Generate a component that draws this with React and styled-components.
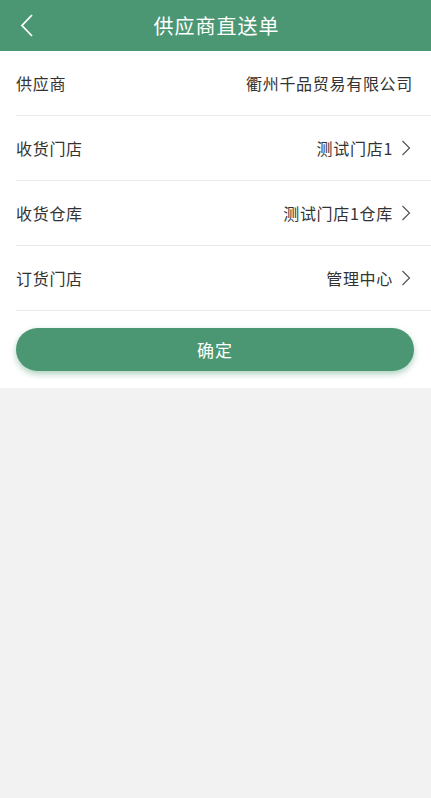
import React from "react";
import styled, { createGlobalStyle } from "styled-components";

const GlobalStyle = createGlobalStyle`
  html, body {
    margin: 0;
    padding: 0;
    background: #f2f2f2;
    font-family: "Noto Sans CJK SC", "Noto Sans", sans-serif;
  }
`;

const Page = styled.div`
  min-height: 798px;
  background: #f2f2f2;
`;

const Header = styled.div`
  height: 51px;
  background: #4b9773;
  display: flex;
  align-items: center;
  justify-content: center;
  position: relative;
  color: #fff;
  font-size: 20px;
  letter-spacing: 1px;
  padding-left: 2px;
`;

const BackButton = styled.div`
  position: absolute;
  left: 18px;
  top: 13px;
  width: 18px;
  height: 26px;
  display: flex;
`;

const Panel = styled.div`
  background: #fff;
  padding-bottom: 17px;
`;

const Row = styled.div`
  height: 64px;
  margin-left: 16px;
  padding-right: ${(p) => (p.$arrow ? "20px" : "18px")};
  border-bottom: 1px solid #ebebeb;
  display: flex;
  align-items: center;
  justify-content: space-between;
  font-size: 16px;
  letter-spacing: 0.7px;
  color: #333;
`;

const Value = styled.div`
  display: flex;
  align-items: center;
  gap: 8px;
`;

const Confirm = styled.button`
  display: block;
  margin: 17px 17px 0 16px;
  width: calc(100% - 33px);
  height: 43px;
  border: none;
  border-radius: 22px;
  background: #4b9773;
  color: #fff;
  font-family: inherit;
  font-size: 17px;
  letter-spacing: 1px;
  box-shadow: 0 3px 6px rgba(75, 151, 115, 0.45);
`;

const Chevron = () => (
  <svg width="10" height="16" viewBox="0 0 10 16">
    <path d="M1.5 1 L8.5 8 L1.5 15" fill="none" stroke="#555" strokeWidth="1.2" />
  </svg>
);

const rows = [
  { label: "供应商", value: "衢州千品贸易有限公司" },
  { label: "收货门店", value: "测试门店1", arrow: true },
  { label: "收货仓库", value: "测试门店1仓库", arrow: true },
  { label: "订货门店", value: "管理中心", arrow: true },
];

export default function App() {
  return (
    <Page>
      <GlobalStyle />
      <Header>
        <BackButton>
          <svg width="18" height="26" viewBox="0 0 18 26">
            <path d="M14 2 L4 12.5 L14 23" fill="none" stroke="#fff" strokeWidth="1.8" />
          </svg>
        </BackButton>
        供应商直送单
      </Header>
      <Panel>
        {rows.map((r) => (
          <Row key={r.label} $arrow={r.arrow}>
            <span>{r.label}</span>
            <Value>
              <span>{r.value}</span>
              {r.arrow && <Chevron />}
            </Value>
          </Row>
        ))}
        <Confirm>确定</Confirm>
      </Panel>
    </Page>
  );
}
